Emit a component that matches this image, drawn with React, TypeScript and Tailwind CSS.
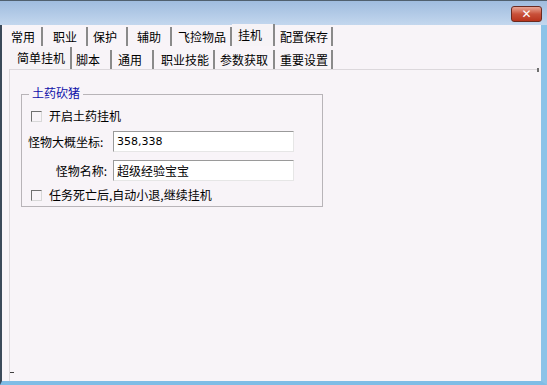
import React from "react";

const row1 = [
  { t: "常用", w: 38, p: 6 },
  { t: "职业", w: 45, p: 10 },
  { t: "保护", w: 40, p: 5 },
  { t: "辅助", w: 44, p: 9 },
  { t: "飞捡物品", w: 60, p: 6 },
  { t: "挂机", w: 43, p: 6 },
  { t: "配置保存", w: 58, p: 5 },
];
const row2 = [
  { t: "简单挂机", w: 62, p: 7 },
  { t: "脚本", w: 40, p: 4 },
  { t: "通用", w: 42, p: 6 },
  { t: "职业技能", w: 61, p: 7 },
  { t: "参数获取", w: 60, p: 5 },
  { t: "重要设置", w: 58, p: 5 },
];

const font = { fontFamily: '"Noto Sans CJK SC", "Liberation Sans", sans-serif' };

function Tab({ label, width, pad, active }: { label: string; width: number; pad: number; active: boolean }) {
  return (
    <div
      style={{ width, paddingLeft: pad }}
      className={`flex items-center text-[12px] leading-none text-black border-r-2 border-r-[#8a8a8a] ${
        active ? "bg-[#f6f3f6] h-[22px]" : "h-[19px]"
      }`}
    >
      {label}
    </div>
  );
}

function Check({ label }: { label: string }) {
  return (
    <div className="flex items-center gap-[7px] h-[14px]">
      <div className="w-[11px] h-[11px] border border-[#707070] border-r-[#d8d8d8] border-b-[#d8d8d8] bg-[#f8f4f8]" />
      <span className="text-[12px] leading-none">{label}</span>
    </div>
  );
}

export default function App() {
  return (
    <div style={font} className="w-[547px] h-[385px] flex flex-col bg-[#f8f4f8] overflow-hidden">
      {/* title bar */}
      <div className="h-[25px] shrink-0 flex justify-end items-start pr-[5px] pt-[5px] bg-gradient-to-b from-[#9fbcde] to-[#c3d7ee] border-t border-[#50606e]">
        <div className="w-[31px] h-[16px] rounded-[3px] border border-[#6b2a20] bg-gradient-to-b from-[#e8a696] via-[#c9513a] to-[#b8331c] flex items-center justify-center">
          <span className="text-white text-[12px] font-bold leading-none" style={{ fontFamily: '"DejaVu Sans", sans-serif' }}>✕</span>
        </div>
      </div>
      <div className="flex-1 flex border-l-[2px] border-l-[#3b4a5a] border-r-[6px] border-r-[#8cc3e8] border-b-[4px] border-b-[#7fbde6]">
        <div className="flex-1 flex flex-col pl-[3px]">
          <div className="flex h-[21px] items-end">
            {row1.map((t) => (
              <Tab key={t.t} label={t.t} width={t.w} pad={t.p} active={t.t === "挂机"} />
            ))}
          </div>
          <div className="flex pl-[5px] h-[23px] items-end">
            {row2.map((t) => (
              <Tab key={t.t} label={t.t} width={t.w} pad={t.p} active={t.t === "简单挂机"} />
            ))}
          </div>
          <div className="relative ml-[4px] border-t border-l border-[#dcd8dc] mr-[2px] flex-1 flex flex-col">
            <div className="absolute -top-[2px] right-[0px] w-[2px] h-[4px] bg-[#707070]" />
            <div className="relative mt-[24px] ml-[11px] w-[302px] h-[113px] border border-[#b8b4b8]">
              <span className="absolute -top-[10px] left-[7px] px-[3px] bg-[#f8f4f8] text-[12px] leading-[16px] text-[#1010a8]">
                土药砍猪
              </span>
              <div className="pl-[9px] pt-[14px]">
                <Check label="开启土药挂机" />
              </div>
              <div className="flex items-center mt-[8px] pl-[6px]">
                <span className="w-[85px] text-[12px]">怪物大概坐标:</span>
                <div className="w-[181px] h-[21px] border border-[#9a9a9a] border-b-[#e6e6e6] border-r-[#e6e6e6] bg-white text-[11px] leading-[19px] pl-[3px]" style={{ fontFamily: '"DejaVu Sans", sans-serif' }}>
                  358,338
                </div>
              </div>
              <div className="flex items-center mt-[8px] pl-[6px]">
                <span className="w-[85px] text-[12px] text-right pr-[6px]">怪物名称:</span>
                <div className="w-[181px] h-[21px] border border-[#9a9a9a] border-b-[#e6e6e6] border-r-[#e6e6e6] bg-white text-[12px] leading-[19px] pl-[3px]">
                  超级经验宝宝
                </div>
              </div>
              <div className="pl-[9px] mt-[7px]">
                <Check label="任务死亡后,自动小退,继续挂机" />
              </div>
            </div>
            <div className="flex-1" />
            <div className="ml-[0px] mb-[8px] w-[4px] h-[1px] bg-[#404040]" />
          </div>
        </div>
      </div>
    </div>
  );
}
